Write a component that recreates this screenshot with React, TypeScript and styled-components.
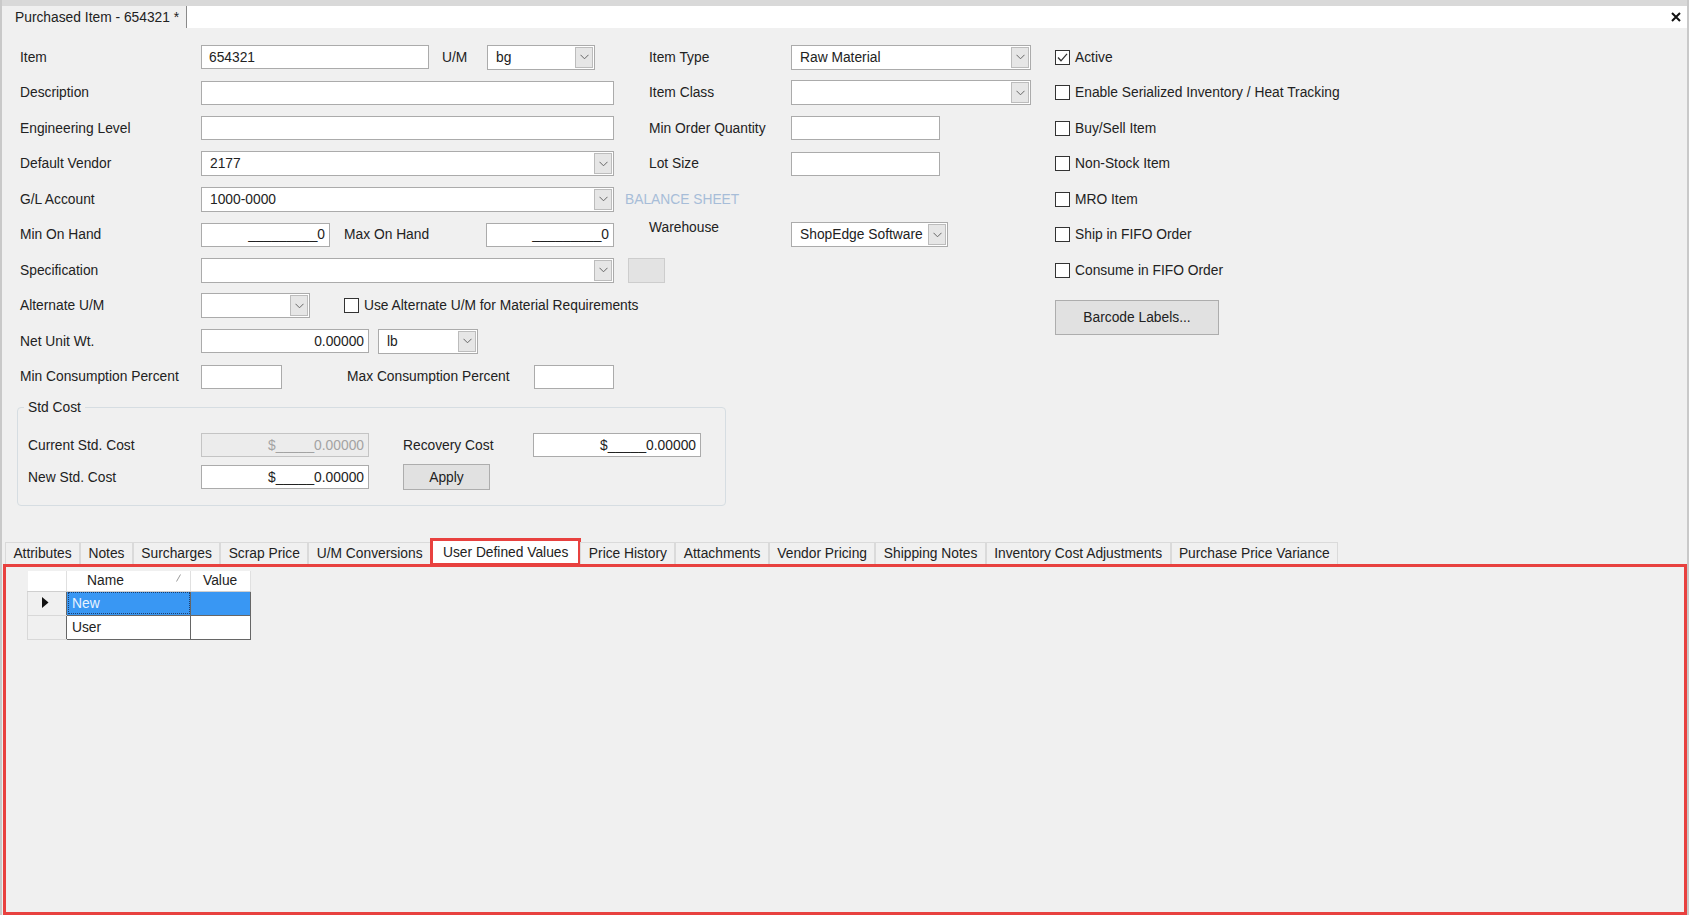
import React from 'react';
import styled, { createGlobalStyle } from 'styled-components';

const GlobalStyle = createGlobalStyle`
  html, body {
    margin: 0;
    padding: 0;
    height: 100%;
    overflow: hidden;
  }
  body {
    background: #f0f0f0;
    font-family: 'Liberation Sans', Arial, sans-serif;
    font-size: 13.8px;
    color: #222;
  }
  #root {
    height: 100%;
  }
`;

const Window = styled.div`
  height: 100vh;
  display: flex;
  flex-direction: column;
  box-sizing: border-box;
  background: #f0f0f0;
  border-left: 2px solid #c9c9c9;
  border-right: 2px solid #c9c9c9;
`;

const TitleBar = styled.div`
  flex: none;
  height: 28px;
  box-sizing: border-box;
  padding-top: 6px;
  display: flex;
  background: #d9d9d9;
`;

const DocTab = styled.div`
  flex: none;
  display: flex;
  align-items: center;
  padding: 0 6px 0 13px;
  width: 185px;
  box-sizing: border-box;
  background: #f0f0f0;
  border-right: 1px solid #8a8a8a;
  white-space: nowrap;
`;

const TitleFill = styled.div`
  flex: 1;
  display: flex;
  justify-content: flex-end;
  align-items: center;
  padding-right: 4px;
  background: #fff;
`;

const CloseButton = styled.button`
  border: none;
  background: transparent;
  padding: 0;
  width: 14px;
  height: 14px;
  display: flex;
  align-items: center;
  justify-content: center;
`;

const Form = styled.div`
  flex: none;
  display: flex;
  padding: 11.25px 0 0 15px;
`;

const Column = styled.div<{ $w?: number }>`
  flex: ${p => (p.$w ? 'none' : '1')};
  width: ${p => (p.$w ? `${p.$w}px` : 'auto')};
  display: flex;
  flex-direction: column;
`;

const Row = styled.div<{ $h?: number }>`
  height: ${p => p.$h ?? 35.5}px;
  display: flex;
  align-items: center;
  white-space: nowrap;
`;

const Label = styled.span<{ $w?: number; $ml?: number; $lift?: number; $muted?: boolean }>`
  flex: none;
  box-sizing: border-box;
  width: ${p => (p.$w ? `${p.$w}px` : 'auto')};
  margin-left: ${p => p.$ml ?? 0}px;
  padding-left: 3px;
  padding-bottom: ${p => (p.$lift ?? 0) * 2}px;
  color: ${p => (p.$muted ? '#a7bdd8' : '#222')};
`;

const TextBox = styled.div<{ $w: number; $ml?: number; $right?: boolean; $disabled?: boolean }>`
  flex: none;
  width: ${p => p.$w}px;
  height: 24px;
  margin-left: ${p => p.$ml ?? 0}px;
  box-sizing: border-box;
  border: 1px solid ${p => (p.$disabled ? '#c4c4c4' : '#ababab')};
  background: ${p => (p.$disabled ? '#ececec' : '#fff')};
  color: ${p => (p.$disabled ? '#a3a3a3' : '#222')};
  display: flex;
  align-items: center;
  justify-content: ${p => (p.$right ? 'flex-end' : 'flex-start')};
  padding: 0 4px 0 7px;
  overflow: hidden;
`;

const ComboBox = styled.div<{ $w: number; $ml?: number }>`
  flex: none;
  width: ${p => p.$w}px;
  height: 25px;
  margin-left: ${p => p.$ml ?? 0}px;
  box-sizing: border-box;
  border: 1px solid #ababab;
  background: #fff;
  display: flex;
  align-items: stretch;
  padding: 1px;
`;

const ComboText = styled.span`
  flex: 1;
  display: flex;
  align-items: center;
  padding-left: 7px;
  overflow: hidden;
`;

const DropButton = styled.span`
  flex: none;
  width: 18px;
  box-sizing: border-box;
  border: 1px solid #bcbcbc;
  background: #e6e6e6;
  display: flex;
  align-items: center;
  justify-content: center;
`;

const PushButton = styled.button<{ $w: number; $h: number; $ml?: number; $mt?: number; $faded?: boolean }>`
  flex: none;
  width: ${p => p.$w}px;
  height: ${p => p.$h}px;
  margin-left: ${p => p.$ml ?? 0}px;
  margin-top: ${p => p.$mt ?? 0}px;
  box-sizing: border-box;
  border: 1px solid ${p => (p.$faded ? '#cdcdcd' : '#adadad')};
  background: ${p => (p.$faded ? '#e3e3e3' : '#e1e1e1')};
  font: inherit;
  color: #222;
  padding: 0;
`;

const CheckRow = styled.label<{ $ml?: number }>`
  display: flex;
  align-items: center;
  gap: 5px;
  margin-left: ${p => p.$ml ?? 0}px;
  white-space: nowrap;
`;

const CheckBox = styled.span`
  flex: none;
  width: 15px;
  height: 15px;
  box-sizing: border-box;
  border: 1px solid #333;
  background: #fff;
  display: flex;
  align-items: center;
  justify-content: center;
`;

const Group = styled.fieldset`
  margin: 5.25px 0 0 0;
  width: 709px;
  box-sizing: border-box;
  padding: 0;
  border: 1px solid #d6dde2;
  border-radius: 4px;
  min-width: 0;
`;

const Legend = styled.legend`
  margin-left: 6px;
  padding: 0 4px;
  line-height: 15px;
`;

const GroupBody = styled.div`
  padding: 14.5px 0 12px 7px;
`;

const Tabs = styled.div`
  flex: 1;
  display: flex;
  flex-direction: column;
  margin-top: 32px;
  min-height: 0;
`;

const TabStrip = styled.div`
  flex: none;
  height: 26px;
  display: flex;
  align-items: flex-end;
  padding-left: 3px;
  position: relative;
  z-index: 1;
`;

const Tab = styled.div<{ $active?: boolean }>`
  flex: none;
  box-sizing: border-box;
  height: ${p => (p.$active ? 28 : 22)}px;
  margin-bottom: ${p => (p.$active ? -2 : 0)}px;
  padding: 0 ${p => (p.$active ? 10 : 7.4)}px;
  display: flex;
  align-items: center;
  white-space: nowrap;
  background: ${p => (p.$active ? '#fff' : '#f0f0f0')};
  border: ${p => (p.$active ? '3px solid #e8413f' : '1px solid #dadada')};
  border-bottom: ${p => (p.$active ? '3px solid #e8413f' : 'none')};
  margin-left: ${p => (p.$active ? -1 : 0)}px;
  margin-right: ${p => (p.$active ? -1 : 0)}px;
`;

const TabPanel = styled.div`
  flex: 1;
  margin-left: 1px;
  border: 3px solid #e8413f;
  background: #f0f0f0;
  padding: 4px 0 0 21px;
`;

const Grid = styled.table`
  border-collapse: collapse;
  table-layout: fixed;
`;

const HeadCell = styled.th<{ $w: number; $pl?: number }>`
  box-sizing: border-box;
  width: ${p => p.$w}px;
  height: 20px;
  padding: 0 0 0 ${p => p.$pl ?? 0}px;
  text-align: left;
  font-weight: normal;
  background: #fff;
  border-right: 1px solid #e0e0e0;
  border-bottom: 1px solid #cfcfcf;
  position: relative;
`;

const SortMark = styled.span`
  position: absolute;
  right: 9px;
  top: 3px;
  display: flex;
`;

const RowHead = styled.td`
  height: 23px;
  padding: 0;
  background: #f0f0f0;
  border-bottom: 1px solid #d8d8d8;
  border-left: 1px solid #d8d8d8;
  border-right: 1px solid #666;
  padding-left: 14px;
`;

const Cell = styled.td<{ $selected?: boolean; $focus?: boolean }>`
  height: 23px;
  padding: 0 0 0 5px;
  border: 1px solid #666;
  background: ${p => (p.$selected ? '#3997f3' : '#fff')};
  color: ${p => (p.$selected ? '#e8f3ff' : '#222')};
  outline: ${p => (p.$focus ? '1px dotted #1d3f6e' : 'none')};
  outline-offset: -2px;
`;

const Chevron = () => (
  <svg width="9" height="6" viewBox="0 0 9 6">
    <polyline points="0.5,0.8 4.5,4.8 8.5,0.8" fill="none" stroke="#666" strokeWidth="1" />
  </svg>
);

const Combo = ({ w, ml, value }: { w: number; ml?: number; value?: string }) => (
  <ComboBox $w={w} $ml={ml}>
    <ComboText>{value}</ComboText>
    <DropButton>
      <Chevron />
    </DropButton>
  </ComboBox>
);

const Check = ({ label, checked, ml }: { label: string; checked?: boolean; ml?: number }) => (
  <CheckRow $ml={ml}>
    <CheckBox>
      {checked && (
        <svg width="13" height="13" viewBox="0 0 13 13">
          <polyline points="2,6.5 5,9.8 11,2.8" fill="none" stroke="#333" strokeWidth="1.3" />
        </svg>
      )}
    </CheckBox>
    {label}
  </CheckRow>
);

const tabs = [
  'Attributes',
  'Notes',
  'Surcharges',
  'Scrap Price',
  'U/M Conversions',
  'User Defined Values',
  'Price History',
  'Attachments',
  'Vendor Pricing',
  'Shipping Notes',
  'Inventory Cost Adjustments',
  'Purchase Price Variance',
];

const rightChecks = [
  { label: 'Active', checked: true },
  { label: 'Enable Serialized Inventory / Heat Tracking' },
  { label: 'Buy/Sell Item' },
  { label: 'Non-Stock Item' },
  { label: 'MRO Item' },
  { label: 'Ship in FIFO Order' },
  { label: 'Consume in FIFO Order' },
];

export default function App() {
  return (
    <>
      <GlobalStyle />
      <Window>
        <TitleBar>
          <DocTab>Purchased Item - 654321 *</DocTab>
          <TitleFill>
            <CloseButton aria-label="Close">
              <svg width="10" height="10" viewBox="0 0 10 10">
                <path d="M1 1L9 9M9 1L1 9" stroke="#111" strokeWidth="2" />
              </svg>
            </CloseButton>
          </TitleFill>
        </TitleBar>

        <Form>
          <Column $w={629}>
            <Row>
              <Label $w={184}>Item</Label>
              <TextBox $w={228}>654321</TextBox>
              <Label $w={48} $ml={10}>U/M</Label>
              <Combo w={108} value="bg" />
            </Row>
            <Row>
              <Label $w={184}>Description</Label>
              <TextBox $w={413} />
            </Row>
            <Row>
              <Label $w={184}>Engineering Level</Label>
              <TextBox $w={413} />
            </Row>
            <Row>
              <Label $w={184}>Default Vendor</Label>
              <Combo w={413} value="2177" />
            </Row>
            <Row>
              <Label $w={184}>G/L Account</Label>
              <Combo w={413} value="1000-0000" />
              <Label $ml={8} $muted>BALANCE SHEET</Label>
            </Row>
            <Row>
              <Label $w={184}>Min On Hand</Label>
              <TextBox $w={129} $right>_________0</TextBox>
              <Label $w={145} $ml={11}>Max On Hand</Label>
              <TextBox $w={128} $right>_________0</TextBox>
            </Row>
            <Row>
              <Label $w={184}>Specification</Label>
              <Combo w={413} />
              <PushButton $w={37} $h={25} $ml={14} $faded aria-label="Specification details" />
            </Row>
            <Row>
              <Label $w={184}>Alternate U/M</Label>
              <Combo w={109} />
              <Check ml={34} label="Use Alternate U/M for Material Requirements" />
            </Row>
            <Row>
              <Label $w={184}>Net Unit Wt.</Label>
              <TextBox $w={168} $right>0.00000</TextBox>
              <Combo w={100} ml={9} value="lb" />
            </Row>
            <Row>
              <Label $w={184}>Min Consumption Percent</Label>
              <TextBox $w={81} />
              <Label $w={190} $ml={62}>Max Consumption Percent</Label>
              <TextBox $w={80} />
            </Row>

            <Group>
              <Legend>Std Cost</Legend>
              <GroupBody>
                <Row $h={32}>
                  <Label $w={176}>Current Std. Cost</Label>
                  <TextBox $w={168} $right $disabled>$_____0.00000</TextBox>
                  <Label $w={133} $ml={31}>Recovery Cost</Label>
                  <TextBox $w={168} $right>$_____0.00000</TextBox>
                </Row>
                <Row $h={32}>
                  <Label $w={176}>New Std. Cost</Label>
                  <TextBox $w={168} $right>$_____0.00000</TextBox>
                  <PushButton $w={87} $h={26} $ml={34}>Apply</PushButton>
                </Row>
              </GroupBody>
            </Group>
          </Column>

          <Column $w={409}>
            <Row>
              <Label $w={145}>Item Type</Label>
              <Combo w={240} value="Raw Material" />
            </Row>
            <Row>
              <Label $w={145}>Item Class</Label>
              <Combo w={240} />
            </Row>
            <Row>
              <Label $w={145}>Min Order Quantity</Label>
              <TextBox $w={149} />
            </Row>
            <Row>
              <Label $w={145}>Lot Size</Label>
              <TextBox $w={149} />
            </Row>
            <Row />
            <Row>
              <Label $w={145} $lift={7}>Warehouse</Label>
              <Combo w={157} value="ShopEdge Software" />
            </Row>
          </Column>

          <Column>
            {rightChecks.map(c => (
              <Row key={c.label}>
                <Check label={c.label} checked={c.checked} />
              </Row>
            ))}
            <PushButton $w={164} $h={35} $mt={12}>Barcode Labels...</PushButton>
          </Column>
        </Form>

        <Tabs>
          <TabStrip>
            {tabs.map(t => (
              <Tab key={t} $active={t === 'User Defined Values'}>{t}</Tab>
            ))}
          </TabStrip>
          <TabPanel>
            <Grid>
              <thead>
                <tr>
                  <HeadCell $w={39} />
                  <HeadCell $w={124} $pl={20}>
                    Name
                    <SortMark>
                      <svg width="5" height="8" viewBox="0 0 5 8">
                        <path d="M4.5 0.5L0.5 7.5" stroke="#9a9a9a" strokeWidth="1" />
                      </svg>
                    </SortMark>
                  </HeadCell>
                  <HeadCell $w={60} $pl={12}>Value</HeadCell>
                </tr>
              </thead>
              <tbody>
                <tr>
                  <RowHead>
                    <svg width="7" height="11" viewBox="0 0 7 11">
                      <polygon points="0,0 6.5,5.5 0,11" fill="#111" />
                    </svg>
                  </RowHead>
                  <Cell $selected $focus>New</Cell>
                  <Cell $selected />
                </tr>
                <tr>
                  <RowHead />
                  <Cell>User</Cell>
                  <Cell />
                </tr>
              </tbody>
            </Grid>
          </TabPanel>
        </Tabs>
      </Window>
    </>
  );
}
